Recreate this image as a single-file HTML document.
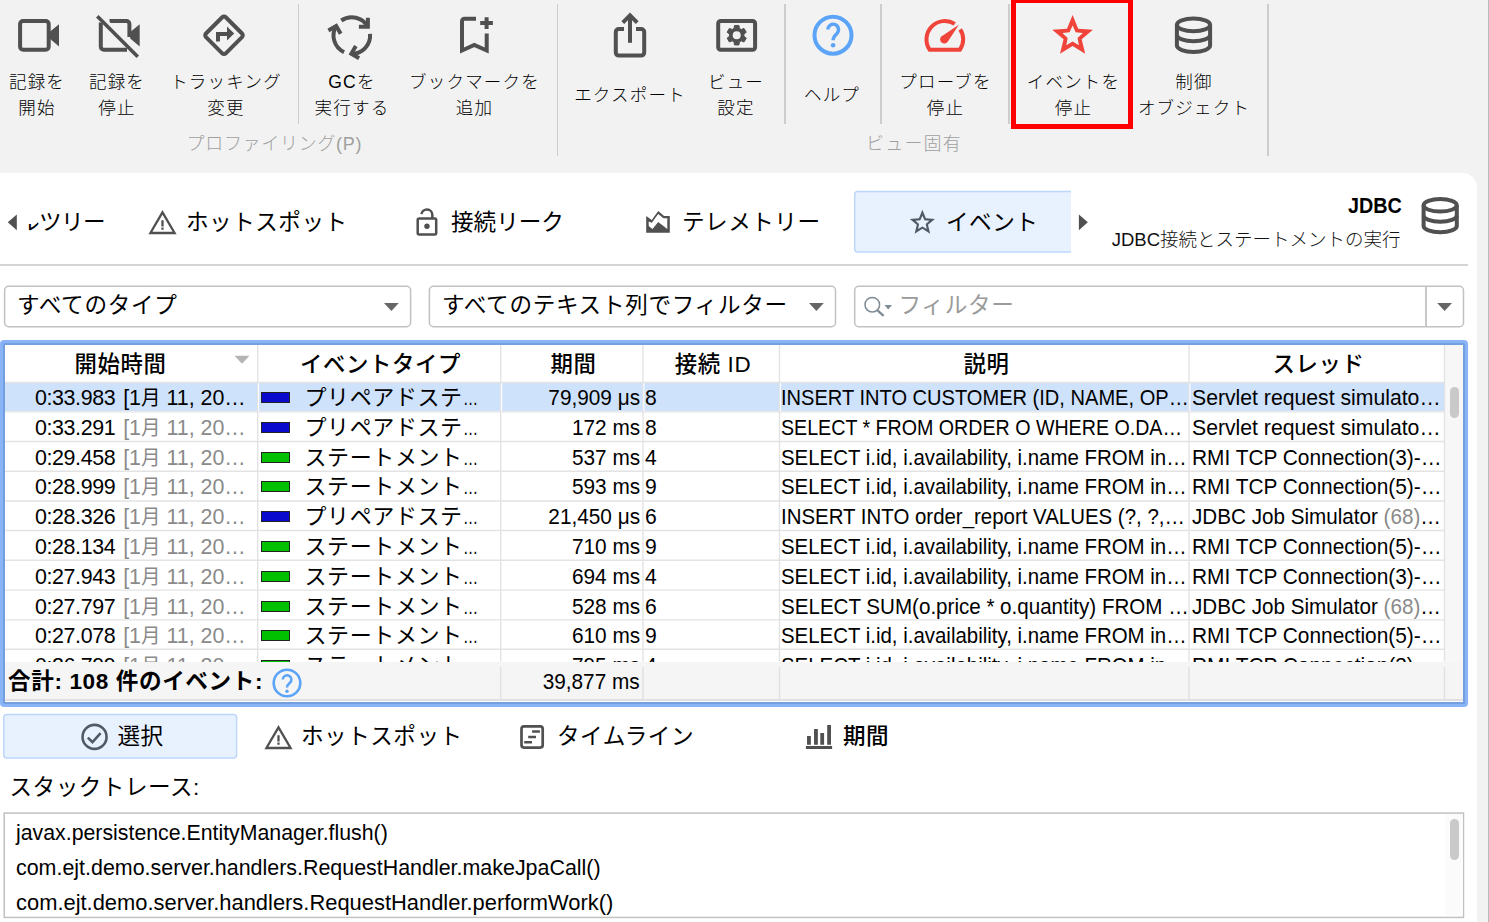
<!DOCTYPE html>
<html lang="ja"><head><meta charset="utf-8"><title>JDBC</title>
<style>
*{box-sizing:border-box;margin:0;padding:0}
html,body{width:1489px;height:922px;overflow:hidden;background:#f2f2f2}
body{position:relative;font-family:"Liberation Sans","Noto Sans CJK JP",sans-serif;color:#000}
.abs{position:absolute}
.t{position:absolute;white-space:nowrap;line-height:1}
.tb{position:absolute;white-space:nowrap;text-align:center;font-size:17.5px;line-height:26.3px;color:#000;font-weight:300;letter-spacing:1.2px;transform:translateX(-50%)}
.sep{position:absolute;width:1.5px;background:#cdcdcd}
.grp{position:absolute;white-space:nowrap;font-size:18px;line-height:1;color:#a0a0a0;font-weight:300;letter-spacing:.6px}
svg{position:absolute;overflow:visible}
.tab{position:absolute;white-space:nowrap;font-size:22.6px;line-height:1;color:#000;letter-spacing:.5px}
.panel{position:absolute;left:0;top:173px;width:1477px;height:749px;background:#fff;border-top-right-radius:14.5px}
.combo{position:absolute;top:286px;height:41px;border:1.5px solid #bdbdbd;border-radius:4px;background:#fff}
.ctext{position:absolute;white-space:nowrap;font-size:22.6px;line-height:1;top:294.5px;letter-spacing:.7px}
.hdr{position:absolute;white-space:nowrap;font-size:22.4px;line-height:1;top:354px;font-weight:500;letter-spacing:.6px;transform:translateX(-50%)}
.row{position:absolute;left:4px;width:1441px;height:30px}
.cell{position:absolute;white-space:nowrap;font-size:22px;line-height:1;top:var(--ct);transform-origin:0 50%}
.m{font-size:20px}
.d{letter-spacing:-.4px}
.el{display:inline-block;transform:scaleX(.72);transform-origin:0 50%;font-size:21px;letter-spacing:0}
.g{color:#8a8a8a}
.k{font-size:22px;letter-spacing:.6px}
.vl{position:absolute;width:1.5px;background:#e2e2e2}
.hl{position:absolute;height:1.5px;background:#e2e2e2;left:4px;width:1441px}
.sw{position:absolute;left:257px;top:calc(var(--ct) + 5px);width:29px;height:11px;border:1px solid #222}
.st{font-size:22px;color:#000;transform-origin:0 50%}
</style></head><body>
<!-- toolbar -->
<div id="toolbar">
<div class="sep" style="left:297.6px;top:4px;height:120px"></div>
<div class="sep" style="left:556.9px;top:4px;height:152px"></div>
<div class="sep" style="left:784px;top:4px;height:120px"></div>
<div class="sep" style="left:880.2px;top:4px;height:120px"></div>
<div class="sep" style="left:1008.2px;top:4px;height:120px"></div>
<div class="sep" style="left:1267.2px;top:4px;height:152px"></div>
<div class="tb" style="left:37px;top:69px">記録を<br>開始</div>
<div class="tb" style="left:117px;top:69px">記録を<br>停止</div>
<div class="tb" style="left:226px;top:69px">トラッキング<br>変更</div>
<div class="tb" style="left:352px;top:69px">GCを<br>実行する</div>
<div class="tb" style="left:474.5px;top:69px">ブックマークを<br>追加</div>
<div class="tb" style="left:630px;top:81.5px">エクスポート</div>
<div class="tb" style="left:736px;top:69px">ビュー<br>設定</div>
<div class="tb" style="left:832px;top:81.5px">ヘルプ</div>
<div class="tb" style="left:945.5px;top:69px">プローブを<br>停止</div>
<div class="tb" style="left:1073.5px;top:69px">イベントを<br>停止</div>
<div class="tb" style="left:1194px;top:69px">制御<br>オブジェクト</div>
<div class="grp" style="left:186.5px;top:134.8px;letter-spacing:.7px">プロファイリング(P)</div>
<div class="grp" style="left:866px;top:134.8px;letter-spacing:1.2px">ビュー固有</div>
<div class="abs" style="left:1011px;top:-2.1px;width:122.3px;height:131px;border:5px solid #ff0000"></div>
</div>
<div class="abs" style="left:1487.5px;top:0;width:1.5px;height:922px;background:linear-gradient(to right,#dadada,#9a9a9a)"></div>
<div class="panel"></div>
<svg id="tbicons" width="1489" height="172" style="left:0;top:0" viewBox="0 0 1489 172">
<!-- camera -->
<rect x="20.1" y="21" width="28.6" height="28.8" rx="3" fill="none" stroke="#505050" stroke-width="4"/>
<polygon points="49.5,32 59,24.2 59,46.4 49.5,38.6" fill="#505050"/>
<!-- camera off -->
<path d="M109.5,21 H126.4 a3,3 0 0 1 3,3 V37 M127,49.8 H103.8 a3,3 0 0 1 -3,-3 V22.5" fill="none" stroke="#505050" stroke-width="4"/>
<polygon points="130.2,32 139.7,24.2 139.7,46.4 130.2,38.6" fill="#505050"/>
<line x1="99.6" y1="14" x2="140.1" y2="54.5" stroke="#f2f2f2" stroke-width="2.8"/>
<line x1="97.3" y1="16.3" x2="137.8" y2="56.8" stroke="#505050" stroke-width="3.6"/>
<!-- tracking -->
<rect x="210" y="21.3" width="28" height="28" rx="2.5" transform="rotate(45 224 35.3)" fill="none" stroke="#505050" stroke-width="4"/>
<path d="M218,41.4 V33.9 H228" fill="none" stroke="#505050" stroke-width="4" stroke-linejoin="miter"/>
<polygon points="227,26.5 234.2,33.5 227,40.4" fill="#505050"/>
<!-- gc -->
<g fill="none" stroke="#505050" stroke-width="4" stroke-linecap="butt"><g><path d="M341.30,20.51 A18.3,18.3 0 0 1 367.88,26.77"/><path d="M358.88,26.77 H367.88 V17.77" stroke-linejoin="miter" stroke-linecap="butt"/></g><g transform="rotate(120 351.8 35.5)"><path d="M341.30,20.51 A18.3,18.3 0 0 1 367.88,26.77"/><path d="M358.88,26.77 H367.88 V17.77" stroke-linejoin="miter" stroke-linecap="butt"/></g><g transform="rotate(240 351.8 35.5)"><path d="M341.30,20.51 A18.3,18.3 0 0 1 367.88,26.77"/><path d="M358.88,26.77 H367.88 V17.77" stroke-linejoin="miter" stroke-linecap="butt"/></g></g>
<!-- bookmark add -->
<path d="M476,18.7 H464.5 a2.5,2.5 0 0 0 -2.5,2.5 V50.5 L474.3,45 L486.7,50.5 V33.4" fill="none" stroke="#505050" stroke-width="4" stroke-linejoin="miter" stroke-miterlimit="10"/>
<path d="M480.2,23 H492.9 M486.6,17.2 V28.9" fill="none" stroke="#505050" stroke-width="4"/>
<!-- export -->
<path d="M624,29 H618.8 a3,3 0 0 0 -3,3 V52.6 a3,3 0 0 0 3,3 H641.2 a3,3 0 0 0 3,-3 V32 a3,3 0 0 0 -3,-3 H636" fill="none" stroke="#505050" stroke-width="4"/>
<path d="M630,42.8 V17" fill="none" stroke="#505050" stroke-width="4"/>
<path d="M622.8,22.6 L630,15.4 L637.2,22.6" fill="none" stroke="#505050" stroke-width="4" stroke-linejoin="miter"/>
<!-- view settings -->
<rect x="718.2" y="20.9" width="36.9" height="28.8" rx="2.5" fill="none" stroke="#505050" stroke-width="4"/>
<polygon points="734.45,25.46 738.95,25.46 739.32,28.38 741.29,29.53 744.01,28.38 746.26,32.28 743.91,34.06 743.91,36.34 746.26,38.12 744.01,42.02 741.29,40.87 739.32,42.02 738.95,44.94 734.45,44.94 734.08,42.02 732.11,40.87 729.39,42.02 727.14,38.12 729.49,36.34 729.49,34.06 727.14,32.28 729.39,28.38 732.11,29.53 734.08,28.38" fill="#505050" stroke="#505050" stroke-width="1" stroke-linejoin="round"/><circle cx="736.7" cy="35.2" r="4" fill="#f2f2f2"/>
<!-- help -->
<circle cx="833" cy="35.2" r="18.5" fill="none" stroke="#5ba4f7" stroke-width="4"/>
<path d="M827.9,29.6 a5.3,5.5 0 1 1 9,4 c-2.3,2.2 -3.8,3.4 -3.8,6.6" fill="none" stroke="#5ba4f7" stroke-width="3.4"/>
<circle cx="833.1" cy="45.3" r="2.3" fill="#5ba4f7"/>
<!-- speedometer -->
<path d="M954.8,23.9 A18.4,18.4 0 0 0 929.7,49.8 H959.9 A18.4,18.4 0 0 0 960.2,29.3" fill="none" stroke="#f0443a" stroke-width="4" stroke-linejoin="round"/>
<path d="M958.9,24.7 L941.3,36.4 a4.2,4.2 0 1 0 6.4,5.4 Z" fill="#f0443a"/>
<!-- star -->
<path d="M1072.60,15.00 L1078.20,28.70 L1092.95,29.79 L1081.66,39.34 L1085.18,53.71 L1072.60,45.92 L1060.02,53.71 L1063.54,39.34 L1052.25,29.79 L1067.00,28.70 Z M1072.60,25.60 L1075.63,32.22 L1082.87,33.06 L1077.51,38.00 L1078.95,45.14 L1072.60,41.56 L1066.25,45.14 L1067.69,38.00 L1062.33,33.06 L1069.57,32.22 Z" fill="#f0443a" fill-rule="evenodd"/>
<!-- db -->
<g fill="none" stroke="#505050" stroke-width="4">
<ellipse cx="1193.5" cy="24.9" rx="16.6" ry="6.3"/>
<path d="M1176.9,24.9 V45.6 a16.6,6.3 0 0 0 33.2,0 V24.9"/>
<path d="M1176.9,35 a16.6,6.3 0 0 0 33.2,0"/>
</g>
</svg>
<div id="tabs">
<svg width="230" height="70" style="left:850px;top:187px" viewBox="850 187 230 70"><path d="M1071,191.55 H857.7 a3,3 0 0 0 -3,3 V249.1 a3,3 0 0 0 3,3 H1071 Z" fill="#e8f1fe" stroke="none"/><path d="M1071,191.55 H857.7 a3,3 0 0 0 -3,3 V249.1 a3,3 0 0 0 3,3 H1071" fill="none" stroke="#bcd7fb" stroke-width="1.5"/></svg>
<div class="abs" style="left:0;top:264px;width:1468px;height:1.5px;background:#d4d4d4"></div>
<div class="abs" style="left:22px;top:205px;width:91.5px;height:36px;overflow:hidden;clip-path:polygon(4.5px 19px,14.5px 19px,14.5px 0,100% 0,100% 100%,4.5px 100%)"><div class="tab" id="t0" style="right:8.5px;top:6.5px;letter-spacing:-.6px">コールツリー</div></div>
<div class="tab" id="t1" style="left:186px;top:211.5px">ホットスポット</div>
<div class="tab" id="t2" style="left:451px;top:211.5px;letter-spacing:0">接続リーク</div>
<div class="tab" id="t3" style="left:682px;top:211.5px">テレメトリー</div>
<div class="tab" id="t4" style="left:946px;top:211.5px">イベント</div>
<div class="t" id="jdbc" style="right:87.5px;top:195px;font-size:21.6px;font-weight:bold;color:#000;transform:scaleX(.915);transform-origin:100% 50%">JDBC</div>
<div class="t" id="jsub" style="right:88.5px;top:230.5px;font-size:18.5px;font-weight:300;color:#111">JDBC接続とステートメントの実行</div>
<svg width="1489" height="100" style="left:0;top:180px" viewBox="0 180 1489 100">
<polygon points="7.8,222.3 16.8,214.4 16.8,230.3" fill="#505050"/>
<polygon points="1087.8,222.3 1078.9,214.4 1078.9,230.3" fill="#505050"/>
<path d="M162.5,212.3 L174.6,233 H150.4 Z" fill="none" stroke="#505050" stroke-width="2.3" stroke-linejoin="miter"/>
<path d="M162.5,220.3 V226.6 M162.5,227.6 V229.8" stroke="#505050" stroke-width="2.3" fill="none"/>
<rect x="417.7" y="218.4" width="18.5" height="16" rx="1.5" fill="none" stroke="#505050" stroke-width="2.5"/>
<path d="M421.5,214.2 A5.45,5.45 0 0 1 432.35,214.7 V218" fill="none" stroke="#505050" stroke-width="2.5"/>
<circle cx="427" cy="226.3" r="2.7" fill="#505050"/>
<path d="M646.2,215.9 L651.8,220 L658.2,210.9 L664.1,215.9 H669.8 V232.8 H646.2 Z M648.7,221.4 V226 L652.5,229.1 L658.2,222.1 L667.3,228.9 V218.2 H663.5 L658.2,214.1 L651.8,222.8 Z" fill="#505050" fill-rule="evenodd"/>
<path d="M922.40,209.80 L925.85,218.25 L934.95,218.92 L927.99,224.82 L930.16,233.68 L922.40,228.87 L914.64,233.68 L916.81,224.82 L909.85,218.92 L918.95,218.25 Z M922.40,215.70 L924.45,220.18 L929.34,220.74 L925.72,224.08 L926.69,228.91 L922.40,226.49 L918.11,228.91 L919.08,224.08 L915.46,220.74 L920.35,220.18 Z" fill="#4f5a66" fill-rule="evenodd"/>
<g fill="none" stroke="#505050" stroke-width="4" transform="translate(246.7,180.4)">
<ellipse cx="1193.5" cy="24.9" rx="16.6" ry="6.3"/>
<path d="M1176.9,24.9 V45.6 a16.6,6.3 0 0 0 33.2,0 V24.9"/>
<path d="M1176.9,35 a16.6,6.3 0 0 0 33.2,0"/>
</g>
</svg>
</div>
<div id="filters">
<svg width="1489" height="50" style="left:0;top:283px" viewBox="0 283 1489 50"><g fill="#fff" stroke="#c1c1c1" stroke-width="1.5"><rect x="4.6" y="286.35" width="406" height="40.3" rx="4"/><rect x="429.4" y="286.35" width="406.1" height="40.3" rx="4"/><rect x="854.7" y="286.35" width="608.8" height="40.3" rx="4"/></g></svg>



<div class="abs" style="left:1425px;top:287px;width:1.5px;height:39px;background:#c8c8c8"></div>
<div class="ctext" id="c1" style="left:17px">すべてのタイプ</div>
<div class="ctext" id="c2" style="left:442px">すべてのテキスト列でフィルター</div>
<div class="ctext" id="c3" style="left:898.5px;color:#9b9b9b">フィルター</div>
<svg width="1489" height="50" style="left:0;top:283px" viewBox="0 283 1489 50">
<polygon points="384,303 398.8,303 391.4,311" fill="#666"/>
<polygon points="809,303 823.8,303 816.4,311" fill="#666"/>
<polygon points="1437.2,303 1452,303 1444.6,311" fill="#666"/>
<circle cx="872.3" cy="304.7" r="7.3" fill="none" stroke="#7f8b95" stroke-width="1.5"/>
<line x1="877.5" y1="310.3" x2="883.6" y2="315.8" stroke="#7f8b95" stroke-width="2.3"/>
<polygon points="884.5,305 892,305 888.2,309.6" fill="#7f8b95"/>
</svg>
</div>
<!--TABLE_START--><div id="table">
<div class="abs" style="left:0;top:340px;width:1468px;height:367px;background:#8ab4f8;border-radius:4px"></div>
<div class="abs" style="left:3.4px;top:343.4px;width:1461.2px;height:360.2px;background:#739fe0;border-radius:1.5px"></div>
<div class="abs" style="left:5px;top:345px;width:1458px;height:357px;background:#fff"></div>
<div class="abs" style="left:1445px;top:345px;width:18px;height:317px;background:#f7f7f7"></div>
<div class="abs" id="rowsclip" style="left:0;top:345px;width:1463px;height:316.5px;overflow:hidden">
<div class="abs" style="left:0;top:-345px;width:1463px;height:800px">
<div class="abs" style="left:5px;top:383.0px;width:1439.5px;height:28.399999999999977px;background:#cfe2fc"></div>
<div class="row" style="top:383.0px;height:29.399999999999977px;--ct:4.0px"><div class="cell c0" style="left:30.5px;transform:scaleX(0.9733)"><span class="d">0:33.983</span> <span style="margin-left:2px">[1<span class="m">月</span> 11, 20…</span></div><div class="sw" style="background:#0a0acd"></div><div class="cell c1 k" style="left:300.5px">プリペアドステ<span class="el">…</span></div><div class="cell c2" style="right:805px;transform:scaleX(.945);transform-origin:100% 50%">79,909 μs</div><div class="cell c3" style="left:641px;transform:scaleX(.96)">8</div><div class="cell c4" style="left:777.3px;transform:scaleX(0.9121)">INSERT INTO CUSTOMER (ID, NAME, OP…</div><div class="cell c5" style="left:1187.7px;transform:scaleX(0.9636)">Servlet request simulato…</div></div>
<div class="row" style="top:412.4px;height:29.600000000000023px;--ct:4.4px"><div class="cell c0" style="left:30.5px;transform:scaleX(0.9733)"><span class="d">0:33.291</span> <span class="g" style="margin-left:2px">[1<span class="m">月</span> 11, 20…</span></div><div class="sw" style="background:#0a0acd"></div><div class="cell c1 k" style="left:300.5px">プリペアドステ<span class="el">…</span></div><div class="cell c2" style="right:805px;transform:scaleX(.945);transform-origin:100% 50%">172 ms</div><div class="cell c3" style="left:641px;transform:scaleX(.96)">8</div><div class="cell c4" style="left:777.3px;transform:scaleX(0.8924)">SELECT * FROM ORDER O WHERE O.DA…</div><div class="cell c5" style="left:1187.7px;transform:scaleX(0.9636)">Servlet request simulato…</div></div>
<div class="row" style="top:442.0px;height:29.69999999999999px;--ct:4.6px"><div class="cell c0" style="left:30.5px;transform:scaleX(0.9733)"><span class="d">0:29.458</span> <span class="g" style="margin-left:2px">[1<span class="m">月</span> 11, 20…</span></div><div class="sw" style="background:#00c000"></div><div class="cell c1 k" style="left:300.5px">ステートメント<span class="el">…</span></div><div class="cell c2" style="right:805px;transform:scaleX(.945);transform-origin:100% 50%">537 ms</div><div class="cell c3" style="left:641px;transform:scaleX(.96)">4</div><div class="cell c4" style="left:777.3px;transform:scaleX(0.9284)">SELECT i.id, i.availability, i.name FROM in…</div><div class="cell c5" style="left:1187.7px;transform:scaleX(0.948)">RMI TCP Connection(3)-…</div></div>
<div class="row" style="top:471.7px;height:29.80000000000001px;--ct:4.7px"><div class="cell c0" style="left:30.5px;transform:scaleX(0.9733)"><span class="d">0:28.999</span> <span class="g" style="margin-left:2px">[1<span class="m">月</span> 11, 20…</span></div><div class="sw" style="background:#00c000"></div><div class="cell c1 k" style="left:300.5px">ステートメント<span class="el">…</span></div><div class="cell c2" style="right:805px;transform:scaleX(.945);transform-origin:100% 50%">593 ms</div><div class="cell c3" style="left:641px;transform:scaleX(.96)">9</div><div class="cell c4" style="left:777.3px;transform:scaleX(0.9284)">SELECT i.id, i.availability, i.name FROM in…</div><div class="cell c5" style="left:1187.7px;transform:scaleX(0.948)">RMI TCP Connection(5)-…</div></div>
<div class="row" style="top:501.5px;height:29.5px;--ct:4.7px"><div class="cell c0" style="left:30.5px;transform:scaleX(0.9733)"><span class="d">0:28.326</span> <span class="g" style="margin-left:2px">[1<span class="m">月</span> 11, 20…</span></div><div class="sw" style="background:#0a0acd"></div><div class="cell c1 k" style="left:300.5px">プリペアドステ<span class="el">…</span></div><div class="cell c2" style="right:805px;transform:scaleX(.945);transform-origin:100% 50%">21,450 μs</div><div class="cell c3" style="left:641px;transform:scaleX(.96)">6</div><div class="cell c4" style="left:777.3px;transform:scaleX(0.9287)">INSERT INTO order_report VALUES (?, ?,…</div><div class="cell c5" style="left:1187.7px;transform:scaleX(0.9382)">JDBC Job Simulator <span class="g">(68)</span>…</div></div>
<div class="row" style="top:531.0px;height:29.799999999999955px;--ct:5.0px"><div class="cell c0" style="left:30.5px;transform:scaleX(0.9733)"><span class="d">0:28.134</span> <span class="g" style="margin-left:2px">[1<span class="m">月</span> 11, 20…</span></div><div class="sw" style="background:#00c000"></div><div class="cell c1 k" style="left:300.5px">ステートメント<span class="el">…</span></div><div class="cell c2" style="right:805px;transform:scaleX(.945);transform-origin:100% 50%">710 ms</div><div class="cell c3" style="left:641px;transform:scaleX(.96)">9</div><div class="cell c4" style="left:777.3px;transform:scaleX(0.9284)">SELECT i.id, i.availability, i.name FROM in…</div><div class="cell c5" style="left:1187.7px;transform:scaleX(0.948)">RMI TCP Connection(5)-…</div></div>
<div class="row" style="top:560.8px;height:29.800000000000068px;--ct:5.0px"><div class="cell c0" style="left:30.5px;transform:scaleX(0.9733)"><span class="d">0:27.943</span> <span class="g" style="margin-left:2px">[1<span class="m">月</span> 11, 20…</span></div><div class="sw" style="background:#00c000"></div><div class="cell c1 k" style="left:300.5px">ステートメント<span class="el">…</span></div><div class="cell c2" style="right:805px;transform:scaleX(.945);transform-origin:100% 50%">694 ms</div><div class="cell c3" style="left:641px;transform:scaleX(.96)">4</div><div class="cell c4" style="left:777.3px;transform:scaleX(0.9284)">SELECT i.id, i.availability, i.name FROM in…</div><div class="cell c5" style="left:1187.7px;transform:scaleX(0.948)">RMI TCP Connection(3)-…</div></div>
<div class="row" style="top:590.6px;height:29.799999999999955px;--ct:5.0px"><div class="cell c0" style="left:30.5px;transform:scaleX(0.9733)"><span class="d">0:27.797</span> <span class="g" style="margin-left:2px">[1<span class="m">月</span> 11, 20…</span></div><div class="sw" style="background:#00c000"></div><div class="cell c1 k" style="left:300.5px">ステートメント<span class="el">…</span></div><div class="cell c2" style="right:805px;transform:scaleX(.945);transform-origin:100% 50%">528 ms</div><div class="cell c3" style="left:641px;transform:scaleX(.96)">6</div><div class="cell c4" style="left:777.3px;transform:scaleX(0.9351)">SELECT SUM(o.price * o.quantity) FROM …</div><div class="cell c5" style="left:1187.7px;transform:scaleX(0.9382)">JDBC Job Simulator <span class="g">(68)</span>…</div></div>
<div class="row" style="top:620.4px;height:29.399999999999977px;--ct:5.0px"><div class="cell c0" style="left:30.5px;transform:scaleX(0.9733)"><span class="d">0:27.078</span> <span class="g" style="margin-left:2px">[1<span class="m">月</span> 11, 20…</span></div><div class="sw" style="background:#00c000"></div><div class="cell c1 k" style="left:300.5px">ステートメント<span class="el">…</span></div><div class="cell c2" style="right:805px;transform:scaleX(.945);transform-origin:100% 50%">610 ms</div><div class="cell c3" style="left:641px;transform:scaleX(.96)">9</div><div class="cell c4" style="left:777.3px;transform:scaleX(0.9284)">SELECT i.id, i.availability, i.name FROM in…</div><div class="cell c5" style="left:1187.7px;transform:scaleX(0.948)">RMI TCP Connection(5)-…</div></div>
<div class="row" style="top:649.8px;height:29.800000000000068px;--ct:5.4px"><div class="cell c0" style="left:30.5px;transform:scaleX(0.9733)"><span class="d">0:26.799</span> <span class="g" style="margin-left:2px">[1<span class="m">月</span> 11, 20…</span></div><div class="sw" style="background:#00c000"></div><div class="cell c1 k" style="left:300.5px">ステートメント<span class="el">…</span></div><div class="cell c2" style="right:805px;transform:scaleX(.945);transform-origin:100% 50%">795 ms</div><div class="cell c3" style="left:641px;transform:scaleX(.96)">4</div><div class="cell c4" style="left:777.3px;transform:scaleX(0.9284)">SELECT i.id, i.availability, i.name FROM in…</div><div class="cell c5" style="left:1187.7px;transform:scaleX(0.948)">RMI TCP Connection(3)-…</div></div>
</div></div>
<svg width="1489" height="365" style="left:0;top:340px" viewBox="0 340 1489 365"><g stroke="#e3e3e3" stroke-width="1.4" fill="none"><path d="M5,382.5 H1444.5"/><path d="M5,411.9 H1444.5"/><path d="M5,441.5 H1444.5"/><path d="M5,471.2 H1444.5"/><path d="M5,501.0 H1444.5"/><path d="M5,530.5 H1444.5"/><path d="M5,560.3 H1444.5"/><path d="M5,590.1 H1444.5"/><path d="M5,619.9 H1444.5"/><path d="M5,649.3 H1444.5"/><path d="M257.7,345 V661.5"/><path d="M500.7,345 V661.5"/><path d="M643.0,345 V661.5"/><path d="M779.5,345 V661.5"/><path d="M1189.0,345 V661.5"/><path d="M1444.5,345 V661.5"/></g><g stroke="#fff" stroke-width="1" fill="none"><path d="M258.59999999999997,383.2 V411.2"/><path d="M501.59999999999997,383.2 V411.2"/><path d="M643.9,383.2 V411.2"/><path d="M780.4,383.2 V411.2"/><path d="M1189.9,383.2 V411.2"/></g></svg>
<div class="hdr" id="h0" style="left:120.5px">開始時間</div>
<div class="hdr" id="h1" style="left:380.5px">イベントタイプ</div>
<div class="hdr" id="h2" style="left:573.5px">期間</div>
<div class="hdr" id="h3" style="left:713px">接続 ID</div>
<div class="hdr" id="h4" style="left:986.5px">説明</div>
<div class="hdr" id="h5" style="left:1318.5px">スレッド</div>
<svg width="20" height="12" style="left:233px;top:354px" viewBox="0 0 20 12"><polygon points="1.5,1.7 16.5,1.7 9,9.7" fill="#b4b4b4"/></svg>
<div class="abs" style="left:1449.5px;top:387px;width:9.5px;height:31px;border-radius:5px;background:#c9c9c9"></div>
<div class="abs" style="left:5px;top:661.5px;width:1458px;height:37.5px;background:#f5f5f5"></div>
<div class="abs" style="left:5px;top:699px;width:1458px;height:1.8px;background:#e0e0e0"></div>
<svg width="1489" height="40" style="left:0;top:664px" viewBox="0 664 1489 40"><g stroke="#e0e0e0" stroke-width="1.4" fill="none"><path d="M500.7,667 V699"/><path d="M643.0,667 V699"/><path d="M779.5,667 V699"/><path d="M1189.0,667 V699"/><path d="M1444.5,667 V699"/></g></svg>
<div class="t" id="ftot" style="left:8px;top:670.5px;font-size:22.6px;font-weight:bold;letter-spacing:.6px;color:#000">合計: 108 件のイベント:</div>
<div class="t" id="fsum" style="right:849px;top:670.5px;font-size:22px;transform:scaleX(.945);transform-origin:100% 50%">39,877 ms</div>
<svg width="34" height="34" style="left:270px;top:665.5px" viewBox="0 0 34 34"><circle cx="17" cy="17" r="13.3" fill="none" stroke="#5ba4f7" stroke-width="2.6"/><path d="M12.8,13.6 a4.3,4.3 0 1 1 7.1,3.2 c-2,1.7 -2.9,2.6 -2.9,4.8" fill="none" stroke="#5ba4f7" stroke-width="2.5"/><circle cx="17" cy="25.2" r="1.7" fill="#5ba4f7"/></svg>
</div><!--TABLE_END-->
<div id="bottom">
<svg width="240" height="52" style="left:0;top:710px" viewBox="0 710 240 52"><rect x="3.75" y="714.5" width="232.8" height="43.6" rx="3" fill="#e8f1fe" stroke="#bcd7fb" stroke-width="1.5"/></svg>
<div class="tab" id="b0" style="left:117.5px;top:726.3px">選択</div>
<div class="tab" id="b1" style="left:301px;top:726.3px">ホットスポット</div>
<div class="tab" id="b2" style="left:557px;top:726.3px">タイムライン</div>
<div class="tab" id="b3" style="left:843px;top:726.3px;font-weight:500">期間</div>
<svg width="1489" height="50" style="left:0;top:715px" viewBox="0 715 1489 50">
<circle cx="94.55" cy="736.9" r="12" fill="none" stroke="#4f5a66" stroke-width="2.6"/>
<path d="M87.8,737.6 L92.5,742.1 L100.6,733.2" fill="none" stroke="#4f5a66" stroke-width="2.6"/>
<g transform="translate(116,515)">
<path d="M162.5,212.3 L174.6,233 H150.4 Z" fill="none" stroke="#505050" stroke-width="2.3" stroke-linejoin="miter"/>
<path d="M162.5,220.3 V226.6 M162.5,227.6 V229.8" stroke="#505050" stroke-width="2.3" fill="none"/>
</g>
<rect x="521.5" y="726.4" width="21.2" height="21.2" rx="2.5" fill="none" stroke="#505050" stroke-width="2.7"/>
<path d="M532.1,731.5 H539.9 M528.2,737 H536 M524.2,742.3 H532" stroke="#505050" stroke-width="2.5" fill="none"/>
<path d="M805.9,747.5 H832.1" stroke="#505050" stroke-width="3" fill="none"/>
<path d="M808.95,744.7 V735.9 M815.95,744.7 V729 M822.2,744.7 V733 M829.1,744.7 V725" stroke="#505050" stroke-width="3.8" fill="none"/>
</svg>
<div class="tab" id="stl" style="left:9.5px;top:776.5px">スタックトレース:</div>
<svg width="1489" height="112" style="left:0;top:810px" viewBox="0 810 1489 112"><rect x="4.2" y="813.05" width="1459.3" height="104.4" fill="#fff" stroke="#c1c1c1" stroke-width="1.5"/></svg>
<div class="abs" style="left:1444.5px;top:814px;width:18px;height:102px;background:#fbfbfb"></div>
<div class="abs" style="left:1449.5px;top:819px;width:9.5px;height:41px;border-radius:5px;background:#c9c9c9"></div>
<div class="t st" id="s1" style="left:16px;top:822px;transform:scaleX(0.9682)">javax.persistence.EntityManager.flush()</div>
<div class="t st" id="s2" style="left:16px;top:857px;transform:scaleX(0.9737)">com.ejt.demo.server.handlers.RequestHandler.makeJpaCall()</div>
<div class="t st" id="s3" style="left:16px;top:891.5px;transform:scaleX(0.9956)">com.ejt.demo.server.handlers.RequestHandler.performWork()</div>
</div>
</body></html>
